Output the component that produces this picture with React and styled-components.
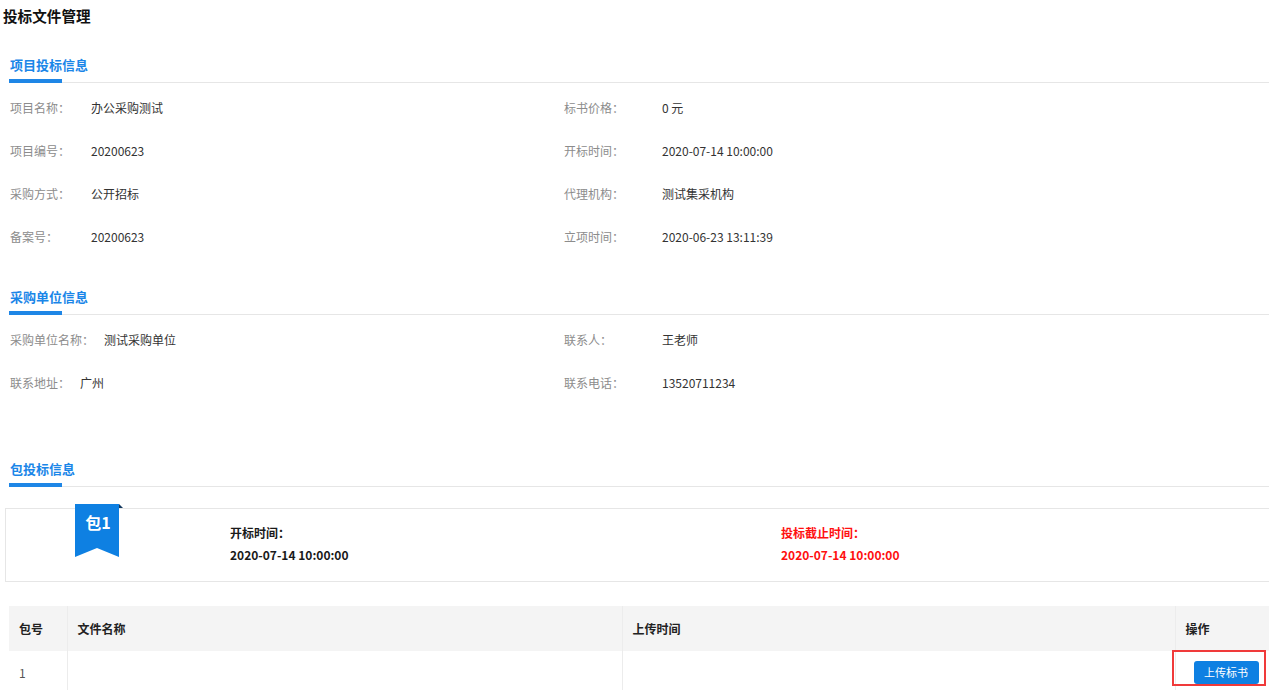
import React from "react";
import styled, { createGlobalStyle } from "styled-components";

const Global = createGlobalStyle`
  html, body { margin: 0; padding: 0; background: #fff; overflow: hidden; }
  body { font-family: "Noto Sans CJK SC", "Microsoft YaHei", sans-serif; color: #333; }
  * { box-sizing: border-box; }
`;

const Page = styled.div`
  width: 1300px;
  display: flex;
  flex-direction: column;
`;

const PageTitle = styled.h1`
  margin: 0;
  padding-left: 3px;
  height: 32px;
  line-height: 32px;
  font-size: 14.6px;
  font-weight: 700;
  color: #111;
`;

const SectionHead = styled.div`
  margin: ${(p) => p.$top}px 0 0 9px;
  height: 33px;
  border-bottom: 1px solid #e6e6e6;
  position: relative;
  &::after {
    content: "";
    position: absolute;
    left: 0;
    bottom: -1px;
    width: 53px;
    height: 3px;
    background: #1e86e6;
    border-bottom: 1px solid #1e86e6;
  }
`;

const SectionTitle = styled.span`
  display: block;
  padding-left: 1px;
  line-height: 30px;
  font-size: 13px;
  font-weight: 700;
  color: #1a86e8;
`;

const InfoGrid = styled.div`
  margin-top: 3px;
  padding-left: 10px;
  display: grid;
  grid-template-columns: 554px 1fr;
`;

const InfoItem = styled.div`
  height: 43px;
  display: flex;
  align-items: center;
  font-size: 12px;
`;

const Label = styled.span`
  color: #8c8c8c;
  flex: none;
  ${(p) => (p.$w ? `width: ${p.$w}px;` : `margin-right: 10px;`)}
`;

const Value = styled.span`
  color: #333;
`;

const Card = styled.div`
  position: relative;
  margin: 21px 0 0 5px;
  height: 74px;
  border: 1px solid #e6e6e6;
  display: flex;
  padding: 13px 0 0 224px;
`;

const Ribbon = styled.div`
  position: absolute;
  left: 69px;
  top: -5px;
  width: 48px;
  height: 53px;
`;

const RibbonText = styled.span`
  position: absolute;
  left: 0;
  top: 6px;
  width: 46px;
  text-align: center;
  line-height: 24px;
  font-size: 16px;
  font-weight: 700;
  color: #fff;
`;

const TimeBlock = styled.div`
  width: ${(p) => p.$w}px;
  display: flex;
  flex-direction: column;
  color: ${(p) => (p.$red ? "#ff1010" : "#1a1a1a")};
  font-weight: 700;
`;

const TimeLabel = styled.div`
  font-size: 12px;
  line-height: 22px;
`;

const TimeValue = styled.div`
  font-size: 12px;
  line-height: 22px;
`;

const Table = styled.table`
  margin: 24px 0 0 9px;
  border-collapse: collapse;
  table-layout: fixed;
  width: 1290px;
  font-size: 12px;
`;

const Th = styled.th`
  height: 45px;
  background: #f4f4f4;
  text-align: left;
  padding: 0 10px;
  font-weight: 700;
  color: #222;
  border-left: 1px solid #ececec;
  &:first-child { border-left: none; }
`;

const Td = styled.td`
  position: relative;
  height: 42px;
  padding: 0 10px;
  color: #555;
  border-left: 1px solid #ececec;
  &:first-child { border-left: none; }
`;

const ActionCell = styled(Td)`
  padding-left: 18px;
`;

const UploadButton = styled.button`
  display: block;
  width: 65px;
  height: 23px;
  border: none;
  border-radius: 3px;
  background: #0e80e2;
  color: #fff;
  font-family: inherit;
  font-size: 11px;
  padding: 0;
  cursor: pointer;
`;

const Highlight = styled.div`
  position: absolute;
  left: -4px;
  top: -1px;
  width: 94px;
  height: 36px;
  border: 2px solid #f03a3a;
  pointer-events: none;
`;

const projectInfo = [
  ["项目名称：", "办公采购测试", "标书价格：", "0 元"],
  ["项目编号：", "20200623", "开标时间：", "2020-07-14 10:00:00"],
  ["采购方式：", "公开招标", "代理机构：", "测试集采机构"],
  ["备案号：", "20200623", "立项时间：", "2020-06-23 13:11:39"],
];

const buyerInfo = [
  ["采购单位名称：", "测试采购单位", "联系人：", "王老师"],
  ["联系地址：", "广州", "联系电话：", "13520711234"],
];

function Section({ top, title, rows, leftW }) {
  return (
    <>
      <SectionHead $top={top}>
        <SectionTitle>{title}</SectionTitle>
      </SectionHead>
      <InfoGrid>
        {rows.map((r, i) => (
          <React.Fragment key={i}>
            <InfoItem>
              <Label $w={leftW}>{r[0]}</Label>
              <Value>{r[1]}</Value>
            </InfoItem>
            <InfoItem>
              <Label $w={98}>{r[2]}</Label>
              <Value>{r[3]}</Value>
            </InfoItem>
          </React.Fragment>
        ))}
      </InfoGrid>
    </>
  );
}

export default function App() {
  return (
    <>
      <Global />
      <Page>
        <PageTitle>投标文件管理</PageTitle>
        <Section top={18} title="项目投标信息" rows={projectInfo} leftW={81} />
        <Section top={24} title="采购单位信息" rows={buyerInfo} />
        <SectionHead $top={50}>
          <SectionTitle>包投标信息</SectionTitle>
        </SectionHead>
        <Card>
          <Ribbon>
            <svg width="48" height="53" viewBox="0 0 48 53">
              <polygon points="0,0 44,0 44,53 22,44 0,53" fill="#0e80e2" />
              <polygon points="44,0 48,4 44,4" fill="#12385e" />
            </svg>
            <RibbonText>包1</RibbonText>
          </Ribbon>
          <TimeBlock $w={551}>
            <TimeLabel>开标时间：</TimeLabel>
            <TimeValue>2020-07-14 10:00:00</TimeValue>
          </TimeBlock>
          <TimeBlock $w={300} $red>
            <TimeLabel>投标截止时间：</TimeLabel>
            <TimeValue>2020-07-14 10:00:00</TimeValue>
          </TimeBlock>
        </Card>
        <Table>
          <colgroup>
            <col style={{ width: 58 }} />
            <col style={{ width: 555 }} />
            <col style={{ width: 553 }} />
            <col />
          </colgroup>
          <thead>
            <tr>
              <Th>包号</Th>
              <Th>文件名称</Th>
              <Th>上传时间</Th>
              <Th>操作</Th>
            </tr>
          </thead>
          <tbody>
            <tr>
              <Td>1</Td>
              <Td></Td>
              <Td></Td>
              <ActionCell>
                <UploadButton>上传标书</UploadButton>
                <Highlight />
              </ActionCell>
            </tr>
          </tbody>
        </Table>
      </Page>
    </>
  );
}
